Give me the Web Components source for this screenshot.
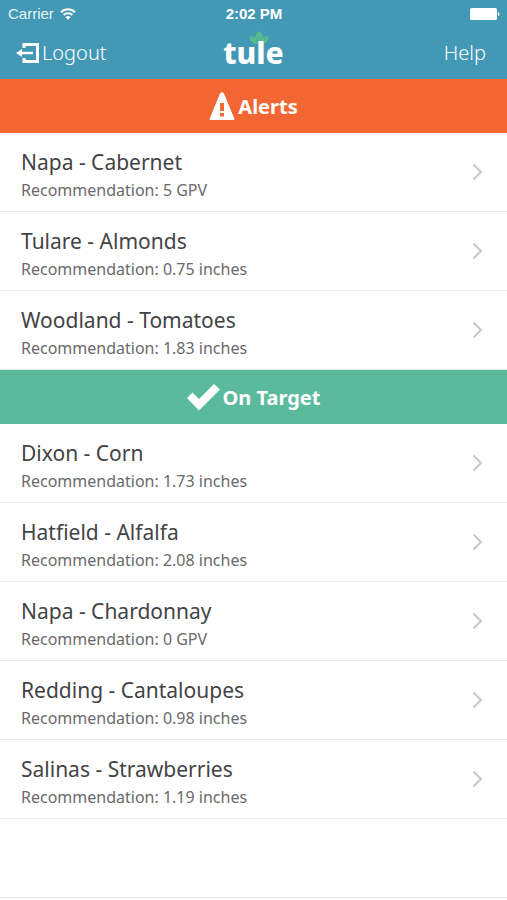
<!DOCTYPE html>
<html lang="en">
<head>
<meta charset="UTF-8">
<meta name="viewport" content="width=device-width, initial-scale=1.0">
<title>Tule</title>
<style>
  body {
    margin: 0;
    background: #fff;
    font-family: "Noto Sans", "Open Sans", sans-serif;
  }
</style>
</head>
<body>
<field-app></field-app>

<script>
class statusBar extends HTMLElement {
   constructor() {
      super();
      this.attachShadow({mode: 'open'});
   }
   connectedCallback() {
      this.shadowRoot.innerHTML = `
        <style>
            :host{
                display:grid;
                grid-template-columns: 1fr auto 1fr;
                align-items:center;
                height:27px;
                padding:0 7px 0 8px;
                font: 15px "Liberation Sans", sans-serif;
                color:#e4f3f8;
            }
            .carrier{
                display:flex;
                align-items:center;
                gap:6px;
            }
            .time{
                font-weight:bold;
                color:#fff;
            }
            .battery{
                justify-self:end;
            }
            svg{
                display:block;
            }
        </style>
        <span class="carrier">Carrier
            <svg width="16" height="12" viewBox="0 0 16 12" fill="none" stroke="#fff" stroke-width="2">
                <path d="M1 4.2a10 10 0 0 1 14 0"/>
                <path d="M3.6 7a6.4 6.4 0 0 1 8.8 0"/>
                <path d="M8 11.8L5.4 9.2a3.8 3.8 0 0 1 5.2 0z" fill="#fff" stroke="none"/>
            </svg>
        </span>
        <span class="time">2:02 PM</span>
        <svg class="battery" width="30" height="12" viewBox="0 0 30 12" fill="#fff">
            <rect width="27" height="12" rx="1.5"/>
            <path d="M28 4c2 .3 2 3.7 0 4z"/>
        </svg>
        `;
   }
}
customElements.define('status-bar', statusBar);

class tuleLogo extends HTMLElement {
   constructor() {
      super();
      this.attachShadow({mode: 'open'});
   }
   connectedCallback() {
      this.shadowRoot.innerHTML = `
        <style>
            :host{
                display:block;
                position:relative;
                font-size:30px;
                font-weight:800;
                line-height:46px;
                color:#fff;
            }
            .leaves{
                position:absolute;
                left:26px;
                top:1px;
            }
            .word{
                position:relative;
            }
        </style>
        <svg class="leaves" width="20" height="16" viewBox="0 0 20 16" fill="#55b98f">
            <path d="M10 0c5 4 5 7 0 11c-5-4-5-7 0-11z"/>
            <path d="M0 5.5c6-1 8 2 9 7.500c-6 0-8-2-9-7.500z"/>
            <path d="M20 5.5c-6-1-8 2-9 7.500c6 0 8-2 9-7.500z"/>
        </svg>
        <span class="word">tule</span>
        `;
   }
}
customElements.define('tule-logo', tuleLogo);

class navBar extends HTMLElement {
   constructor() {
      super();
      this.attachShadow({mode: 'open'});
   }
   connectedCallback() {
      this.shadowRoot.innerHTML = `
        <style>
            :host{
                display:grid;
                grid-template-columns: 1fr auto 1fr;
                align-items:center;
                height:52px;
                padding:0 16px;
            }
            button{
                display:flex;
                align-items:center;
                gap:3px;
                padding:0;
                border:0;
                background:none;
                font: 300 20px/28px "Noto Sans", "Open Sans", sans-serif;
                color:#fff;
                cursor:pointer;
            }
            .help{
                justify-self:end;
                padding-right:5px;
            }
        </style>
        <button type="button">
            <svg width="23" height="20" viewBox="0 0 23 20">
                <path d="M8 5V1.5H21.5V18.5H8V15" fill="none" stroke="#fff" stroke-width="3"/>
                <path d="M0 10l6-4v2.7h11v2.6H6V14z" fill="#fff"/>
            </svg>
            Logout
        </button>
        <tule-logo></tule-logo>
        <button class="help" type="button">Help</button>
        `;
   }
}
customElements.define('nav-bar', navBar);

class fieldSection extends HTMLElement {
   constructor() {
      super();
      this.attachShadow({mode: 'open'});
   }
   connectedCallback() {
      this.shadowRoot.innerHTML = `
        <style>
            :host{
                display:block;
            }
            h2{
                display:flex;
                justify-content:center;
                align-items:center;
                gap:3px;
                height:54px;
                margin:0;
                background:var(--section-color);
                font-size:20px;
                font-weight:700;
                color:#fff;
            }
        </style>
        <h2><slot name="icon"></slot>${this.getAttribute('heading')}</h2>
        <slot></slot>
        `;
   }
}
customElements.define('field-section', fieldSection);

class fieldRow extends HTMLElement {
   constructor() {
      super();
      this.attachShadow({mode: 'open'});
   }
   connectedCallback() {
      this.shadowRoot.innerHTML = `
        <style>
            :host{
                display:block;
            }
            a{
                display:flex;
                justify-content:space-between;
                align-items:center;
                box-sizing:border-box;
                height:79px;
                padding:0 24px 0 21px;
                border-bottom:1px solid #e9e9e9;
                text-decoration:none;
            }
            .text{
                padding-top:5px;
            }
            .name{
                font-size:21px;
                line-height:30px;
                color:#434345;
            }
            .advice{
                font-size:16px;
                line-height:26px;
                color:#6a6a6c;
            }
        </style>
        <a href="#">
            <div class="text">
                <div class="name">${this.getAttribute('name')}</div>
                <div class="advice">Recommendation: ${this.getAttribute('amount')}</div>
            </div>
            <svg width="11" height="18" viewBox="0 0 11 18" fill="none" stroke="#c7c7cc" stroke-width="2">
                <path d="M1.5 1.5L9 9L1.5 16.5"/>
            </svg>
        </a>
        `;
   }
}
customElements.define('field-row', fieldRow);

class fieldApp extends HTMLElement {
   constructor() {
      super();
      this.attachShadow({mode: 'open'});
   }
   connectedCallback() {
      this.shadowRoot.innerHTML = `
        <style>
            :host{
                display:block;
            }
            header{
                background:#4298b5;
            }
            .alerts{
                --section-color:#f16633;
            }
            .target{
                --section-color:#5bba9b;
            }
            .blank{
                height:78px;
                border-bottom:1px solid #e9e9e9;
            }
        </style>
        <header>
            <status-bar></status-bar>
            <nav-bar></nav-bar>
        </header>
        <main>
            <field-section class="alerts" heading="Alerts">
                <svg slot="icon" width="26" height="28" viewBox="0 0 26 28">
                    <path d="M11 1.5q2-2.5 4 0L25.5 27q.3 1-1 1H1.5q-1.300 0-1-1z" fill="#fff"/>
                    <path d="M11 11h4v8h-4zM11 21h4v3.5h-4z" fill="#f16633"/>
                </svg>
                <field-row name="Napa - Cabernet" amount="5 GPV"></field-row>
                <field-row name="Tulare - Almonds" amount="0.75 inches"></field-row>
                <field-row name="Woodland - Tomatoes" amount="1.83 inches"></field-row>
            </field-section>
            <field-section class="target" heading="On Target">
                <svg slot="icon" width="33" height="27" viewBox="0 0 33 27">
                    <path d="M0 14l5.5-5.5L12 15L27 0l6 5.5L12 26.5z" fill="#fff"/>
                </svg>
                <field-row name="Dixon - Corn" amount="1.73 inches"></field-row>
                <field-row name="Hatfield - Alfalfa" amount="2.08 inches"></field-row>
                <field-row name="Napa - Chardonnay" amount="0 GPV"></field-row>
                <field-row name="Redding - Cantaloupes" amount="0.98 inches"></field-row>
                <field-row name="Salinas - Strawberries" amount="1.19 inches"></field-row>
            </field-section>
            <div class="blank"></div>
        </main>
        `;
   }
}
customElements.define('field-app', fieldApp);
</script>
</body>
</html>
